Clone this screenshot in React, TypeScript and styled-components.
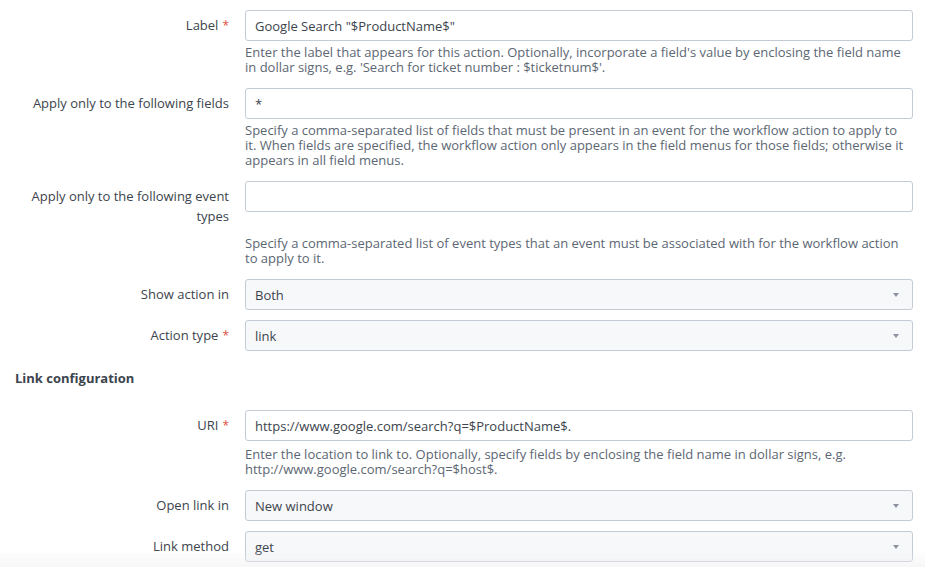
import React from "react";
import styled, { createGlobalStyle } from "styled-components";

const Global = createGlobalStyle`
  html, body { margin: 0; padding: 0; background: #ffffff; }
  body { font-family: "Open Sans", "Liberation Sans", Arial, sans-serif; font-size: 13px; color: #3c444d; }
`;

const Page = styled.div`
  padding: 10px 12px 0 0;
  width: 925px;
  box-sizing: border-box;
`;

const Group = styled.div<{ $spaced?: boolean }>`
  display: grid;
  grid-template-columns: 229px 1fr;
  column-gap: 16px;
  margin-bottom: ${(p) => (p.$spaced ? "13px" : "10px")};
`;

const Label = styled.label`
  padding: 5px 0 6px 20px;
  line-height: 20px;
  text-align: right;
  color: #3c444d;
`;

const Req = styled.span`
  color: #dc4e41;
  margin-left: 4px;
  font-size: 12px;
  line-height: 0;
`;

const TextInput = styled.div`
  height: 31px;
  box-sizing: border-box;
  border: 1px solid #c3cbd4;
  border-radius: 3px;
  background: #ffffff;
  padding: 1px 9px 0;
  display: flex;
  align-items: center;
  color: #3c444d;
  font-size: 13px;
`;

const SelectBox = styled(TextInput)`
  background: #f7f8fa;
  justify-content: space-between;
`;

const Caret = styled.span`
  width: 0;
  height: 0;
  border-left: 3px solid transparent;
  border-right: 3px solid transparent;
  border-top: 4px solid #8a939d;
  margin-right: 4px;
`;

const Help = styled.div<{ $gap?: number }>`
  grid-column: 2;
  margin-top: ${(p) => p.$gap ?? 4}px;
  line-height: 15px;
  color: #5c6773;
  font-size: 13px;
`;

const Heading = styled.h3`
  margin: 19px 0 24px 15px;
  font-size: 13px;
  line-height: 16px;
  font-weight: bold;
  color: #3c444d;
`;

const BottomFade = styled.div`
  position: fixed;
  left: 0;
  right: 0;
  bottom: 0;
  height: 18px;
  pointer-events: none;
  background: linear-gradient(to bottom, rgba(240, 240, 240, 0), rgba(240, 240, 240, 0.55));
`;

type FieldProps = {
  label: string;
  required?: boolean;
  value?: string;
  select?: boolean;
  help?: React.ReactNode;
  helpGap?: number;
};

function Field({ label, required, value, select, help, helpGap }: FieldProps) {
  return (
    <Group $spaced={!!help}>
      <Label>
        {label}
        {required && <Req>*</Req>}
      </Label>
      {select ? (
        <SelectBox>
          <span>{value}</span>
          <Caret />
        </SelectBox>
      ) : (
        <TextInput>{value}</TextInput>
      )}
      {help && <Help $gap={helpGap}>{help}</Help>}
    </Group>
  );
}

export default function App() {
  return (
    <Page>
      <Global />
      <Field
        label="Label"
        required
        value={'Google Search "$ProductName$"'}
        help={
          <>
            Enter the label that appears for this action. Optionally, incorporate a field's value by enclosing the field name
            <br />
            in dollar signs, e.g. 'Search for ticket number : $ticketnum$'.
          </>
        }
      />
      <Field
        label="Apply only to the following fields"
        value="*"
        help={
          <>
            Specify a comma-separated list of fields that must be present in an event for the workflow action to apply to
            <br />
            it. When fields are specified, the workflow action only appears in the field menus for those fields; otherwise it
            <br />
            appears in all field menus.
          </>
        }
      />
      <Field
        label="Apply only to the following event types"
        value=""
        help={
          <>
            Specify a comma-separated list of event types that an event must be associated with for the workflow action
            <br />
            to apply to it.
          </>
        }
      />
      <Field label="Show action in" value="Both" select />
      <Field label="Action type" required value="link" select />
      <Heading>Link configuration</Heading>
      <Field
        label="URI"
        required
        value="https://www.google.com/search?q=$ProductName$."
        helpGap={6}
        help={
          <>
            Enter the location to link to. Optionally, specify fields by enclosing the field name in dollar signs, e.g.
            <br />
            http://www.google.com/search?q=$host$.
          </>
        }
      />
      <Field label="Open link in" value="New window" select />
      <Field label="Link method" value="get" select />
      <BottomFade />
    </Page>
  );
}
